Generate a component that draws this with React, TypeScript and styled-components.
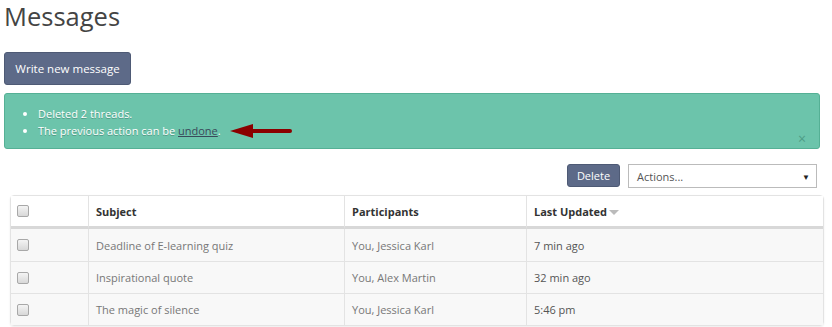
import React, { FC } from 'react'
import styled, { createGlobalStyle } from 'styled-components'

interface IThread {
  subject: string;
  participants: string;
  updated: string;
}

const THREADS: IThread[] = [
  { subject: 'Deadline of E-learning quiz', participants: 'You, Jessica Karl', updated: '7 min ago' },
  { subject: 'Inspirational quote', participants: 'You, Alex Martin', updated: '32 min ago' },
  { subject: 'The magic of silence', participants: 'You, Jessica Karl', updated: '5:46 pm' },
];

const App: FC = () => {
  return (
    <>
      <GlobalStyle />
      <Page>
        <Title>{'Messages'}</Title>
        <WriteButton>{'Write new message'}</WriteButton>

        <Alert>
          <AlertList>
            <li>{'Deleted 2 threads.'}</li>
            <li>
              {'The previous action can be '}
              <UndoLink>{'undone'}</UndoLink>
              {'.'}
            </li>
          </AlertList>
          <Arrow width="64" height="16" viewBox="0 0 64 16">
            <path d="M20 8 H60" stroke="#8b0000" strokeWidth="4" strokeLinecap="round" />
            <path d="M0 8 L23 1 L23 15 Z" fill="#8b0000" />
          </Arrow>
          <Close>{'×'}</Close>
        </Alert>

        <Toolbar>
          <DeleteButton>{'Delete'}</DeleteButton>
          <Select>
            <span>{'Actions...'}</span>
            <Caret>{'▼'}</Caret>
          </Select>
        </Toolbar>

        <Table>
          <thead>
            <tr>
              <CheckCell as="th"><Checkbox /></CheckCell>
              <HeadCell width={256}>{'Subject'}</HeadCell>
              <HeadCell width={182}>{'Participants'}</HeadCell>
              <HeadCell>
                {'Last Updated'}
                <SortCaret />
              </HeadCell>
            </tr>
          </thead>
          <tbody>
            {THREADS.map(({ subject, participants, updated }) => (
              <tr key={subject}>
                <CheckCell><Checkbox /></CheckCell>
                <Cell>{subject}</Cell>
                <Cell>{participants}</Cell>
                <Cell dark>{updated}</Cell>
              </tr>
            ))}
          </tbody>
        </Table>
      </Page>
    </>
  );
};

export default App;

const GlobalStyle = createGlobalStyle`
  body {
    margin: 0;
    background: #fff;
    font-family: "Open Sans", "Liberation Sans", sans-serif;
  }
`;

const Page = styled.div`
  width: 832px;
  height: 327px;
  overflow: hidden;
  padding: 0 0 0 4px;
  box-sizing: border-box;
`;

const Title = styled.h1`
  margin: 0;
  padding-top: 1px;
  font-size: 25.5px;
  font-weight: 400;
  line-height: 30px;
  color: #444;
  height: 51px;
`;

const WriteButton = styled.button`
  display: block;
  width: 127px;
  height: 33px;
  padding: 0;
  border: 1px solid #4e5a75;
  border-radius: 3px;
  background: #5d6a88;
  color: #fff;
  font-family: inherit;
  font-size: 11.5px;
`;

const Alert = styled.div`
  position: relative;
  margin-top: 8px;
  width: 816px;
  height: 56px;
  box-sizing: border-box;
  background: #6cc4ab;
  border: 1px solid #55b095;
  border-radius: 3px;
  color: #fff;
  font-size: 11px;
  text-shadow: 0 1px 0 rgba(0, 0, 0, 0.25);
`;

const AlertList = styled.ul`
  margin: 0;
  padding: 11px 0 0 33px;
  line-height: 17px;
`;

const UndoLink = styled.a`
  color: #3a4a5a;
  text-decoration: underline;
  text-shadow: none;
`;

const Arrow = styled.svg`
  position: absolute;
  left: 225px;
  top: 29px;
`;

const Close = styled.span`
  position: absolute;
  right: 13px;
  bottom: 0px;
  font-size: 14px;
  color: #4e9c86;
  text-shadow: none;
`;

const Toolbar = styled.div`
  display: flex;
  justify-content: flex-end;
  align-items: flex-start;
  gap: 8px;
  width: 813px;
  margin-top: 15px;
  height: 31px;
`;

const DeleteButton = styled.button`
  width: 53px;
  height: 23px;
  padding: 0;
  border: 1px solid #4e5a75;
  border-radius: 3px;
  background: #5d6a88;
  color: #fff;
  font-family: inherit;
  font-size: 11px;
`;

const Select = styled.div`
  display: flex;
  align-items: center;
  justify-content: space-between;
  width: 189px;
  height: 24px;
  box-sizing: border-box;
  padding: 0 6px 0 8px;
  border: 1px solid #bbb;
  font-size: 11px;
  color: #555;
`;

const Caret = styled.span`
  font-size: 8px;
  color: #222;
`;

const Table = styled.table`
  margin-left: 6px;
  width: 814px;
  border-collapse: separate;
  border-spacing: 0;
  border: 1px solid #e3e3e3;
  border-radius: 4px;
  box-shadow: 0 1px 2px rgba(0, 0, 0, 0.08);
  font-size: 11px;
  table-layout: fixed;

  th,
  td {
    box-sizing: border-box;
  }

  tbody td {
    background: #f8f8f8;
    border-top: 1px solid #e3e3e3;
  }

  tbody tr:first-child td {
    border-top: none;
  }
`;

const HeadCell = styled.th<{ width?: number }>`
  ${({ width }) => (width ? `width: ${width}px;` : '')}
  height: 33px;
  padding: 0 7px;
  text-align: left;
  font-weight: 700;
  color: #333;
  background: #fff;
  border-left: 1px solid #e3e3e3;
  border-bottom: 3px solid #d8d8d8;
`;

const CheckCell = styled.td`
  width: 77px;
  height: 32px;
  padding: 0 0 0 6px;
  text-align: left;
  background: #fff;
  border-bottom: 3px solid #d8d8d8;

  tbody & {
    border-bottom: none;
  }

  thead & {
    height: 33px;
  }
`;

const Cell = styled.td<{ dark?: boolean }>`
  height: 32px;
  padding: 0 7px;
  color: ${({ dark }) => (dark ? '#555' : '#777')};
  border-left: 1px solid #e3e3e3;
`;

const Checkbox = styled.span`
  display: block;
  width: 10px;
  height: 10px;
  border: 1px solid #a8a8a8;
  border-radius: 2px;
  background: linear-gradient(#f4f4f4, #d8d8d8);
`;

const SortCaret = styled.span`
  display: inline-block;
  margin-left: 2px;
  vertical-align: middle;
  border-left: 5px solid transparent;
  border-right: 5px solid transparent;
  border-top: 5px solid #bbb;
`;
